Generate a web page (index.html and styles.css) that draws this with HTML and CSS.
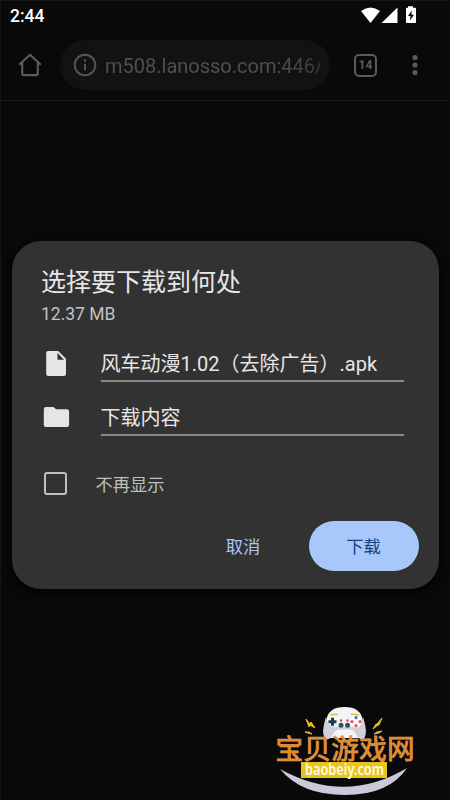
FILE: index.html
```html
<!DOCTYPE html>
<html lang="zh-CN">
<head>
<meta charset="utf-8">
<title>下载</title>
<link rel="stylesheet" href="styles.css">
</head>
<body>
<div class="screen">
  <header class="status">
    <span class="clock">2:44</span>
    <svg class="status-icons" width="58" height="20" viewBox="0 0 58 20" fill="#fff">
      <path d="M0 5Q9.500-2.200 19 5L9.500 17Z"/>
      <path d="M36.500 1.500V17H20.500Z"/>
      <path d="M47 .3h5v1.500h2.200q.8 0 .8.800v13.600q0 .8-.8.800h-8.400q-.8 0-.8-.8V2.600q0-.8.800-.8H47Z"/>
      <path d="M50.800 4.500L47 10h2.500l-.6 4.500L53 8.800h-2.600Z" fill="#080808"/>
    </svg>
  </header>
  <nav class="toolbar">
    <svg class="home" width="24" height="24" viewBox="0 0 24 24" fill="none" stroke="#5b5b5b" stroke-width="2.100">
      <path d="M1.200 11.800L12 1.800l10.800 10M4.200 9.500v11.600q0 1 1 1h13.600q1 0 1-1V9.500" stroke-linejoin="round"/>
    </svg>
    <div class="address">
      <svg width="24" height="24" viewBox="0 0 24 24" fill="none" stroke="#555" stroke-width="2">
        <circle cx="12" cy="12" r="10.300"/><path d="M12 10.800v6.400M12 6.600v2.200"/>
      </svg>
      <span class="url">m508.lanosso.com:446/</span>
    </div>
    <div class="tabs">14</div>
    <svg class="more" width="6" height="22" viewBox="0 0 6 22" fill="#5b5b5b">
      <circle cx="3" cy="3.500" r="2.600"/><circle cx="3" cy="11" r="2.600"/><circle cx="3" cy="18.500" r="2.600"/>
    </svg>
  </nav>
  <main class="page">
    <section class="dialog">
      <h1>选择要下载到何处</h1>
      <p class="size">12.37 MB</p>
      <div class="row">
        <svg width="30" height="28" viewBox="0 0 30 28" fill="#e5e5e5">
          <path fill-rule="evenodd" d="M7.200 2h10L25 9.800V25q0 2-2 2H7.200q-2 0-2-2V4q0-2 2-2ZM16.500 4v6.800h6.500Z"/>
        </svg>
        <div class="field">风车动漫1.02（去除广告）.apk</div>
      </div>
      <div class="row">
        <svg width="30" height="28" viewBox="0 0 30 28" fill="#e5e5e5">
          <path d="M5 4h7.500l2.600 2.300h10.800q2.200 0 2.200 2.200v13.300q0 2.200-2.200 2.200H5q-2.200 0-2.200-2.200V6.200Q2.800 4 5 4Z"/>
        </svg>
        <div class="field">下载内容</div>
      </div>
      <label class="check"><span class="box"></span><span>不再显示</span></label>
      <div class="actions">
        <button class="cancel">取消</button>
        <button class="download">下载</button>
      </div>
    </section>
  </main>
  <svg class="watermark" width="160" height="100" viewBox="0 0 160 100">
    <path d="M15 69Q80 105 142 68Q124 95 80 95Q36 95 15 69Z" fill="#c9cad9"/>
    <path d="M61 22C62 11 69 7 79.500 7S97 11 98 22L97 38H62Z" fill="#f4f4f5"/>
    <path d="M61 17Q56 32 59.500 38Q64 42 68 34Q70 29.500 75 29.500H84Q89 29.500 91 34Q95 42 99.500 38Q103 32 98 17Q97 27 88 27H71Q62 27 61 17Z" fill="#cfd0dc"/>
    <path d="M65 15.500q3-2 8-1M86 14.500q5-1 8 1" stroke="#e4b84c" stroke-width="1.500" fill="none"/>
    <path d="M63.500 21.700h8M67.500 17.700v8" stroke="#173d52" stroke-width="3"/>
    <circle cx="91" cy="21.700" r="5.800" fill="#fff"/>
    <circle cx="87" cy="21.700" r="1.600" fill="#e3505f"/><circle cx="95" cy="21.700" r="1.600" fill="#e3505f"/>
    <circle cx="91" cy="17.700" r="1.600" fill="#347ca6"/><circle cx="91" cy="25.700" r="1.600" fill="#e3505f"/>
    <circle cx="76" cy="20.500" r="1.200" fill="#d94352"/><circle cx="82.500" cy="20.500" r="1.200" fill="#d94352"/>
    <circle cx="76" cy="25.300" r="2.500" fill="#25566c"/><circle cx="82.500" cy="25.300" r="2.500" fill="#25566c"/>
    <path d="M41 19l4 5 1-2 4 6-5-3-1 2ZM40 32l4 0 3 2-4-1ZM117 18l-5 6h-1l-3 5 5-4h1ZM117 31l-5 1-3 2 5-1Z" fill="#efba25" stroke="#efba25"/>
    <text x="10.500" y="58.500" class="brand" textLength="139">宝贝游戏网</text>
    <rect x="36" y="62" width="86" height="16" fill="#e8c51d"/>
    <text x="40" y="74.500" class="domain" textLength="79" lengthAdjust="spacingAndGlyphs">baobeiy.com</text>
  </svg>
</div>
</body>
</html>
```

FILE: styles.css
```css
* { box-sizing: border-box; }
body { margin: 0; background: #090909; }
.screen {
  position: relative;
  width: 450px;
  height: 800px;
  overflow: hidden;
  display: flex;
  flex-direction: column;
  background: #090909;
  border-top: 1px solid #171717;
  border-left: 1px solid #151515;
  font-family: Roboto, "Noto Sans CJK SC", sans-serif;
}
.status {
  height: 34px;
  display: flex;
  justify-content: space-between;
  padding: 5px 32px 0 9px;
}
.clock { color: #fff; font-size: 17.500px; line-height: 21px; font-weight: 500; }
.toolbar {
  height: 66px;
  display: flex;
  align-items: center;
  padding: 0 32px 6px 17px;
  border-bottom: 1px solid #191919;
}
.address {
  width: 270px;
  height: 50px;
  margin-left: 18px;
  padding: 0 10px 0 13px;
  display: flex;
  align-items: center;
  gap: 8px;
  border-radius: 25px;
  background: #121212;
}
.address svg { flex: none; }
.url {
  overflow: hidden;
  white-space: nowrap;
  font-size: 20px;
  line-height: 28px;
  padding-top: 2px;
  color: #4d4d4d;
  background: linear-gradient(90deg, #505050 80%, #383838);
  -webkit-background-clip: text;
  background-clip: text;
  -webkit-text-fill-color: transparent;
}
.tabs {
  width: 23px;
  height: 23px;
  margin: 1px 0 0 24px;
  border: 2px solid #5b5b5b;
  border-radius: 5px;
  color: #5b5b5b;
  font-size: 12px;
  font-weight: 700;
  line-height: 19px;
  text-align: center;
}
.more { margin-left: auto; }
.status-icons { margin-right: -.5px; }
.page { padding: 140px 11.500px 0 10.500px; }
.dialog {
  height: 348px;
  padding: 26px 20px 0 29.500px;
  border-radius: 29px;
  background: #323232;
  box-shadow: 0 3px 10px #000;
}
h1 {
  margin: 0;
  color: #e6e6e6;
  font-size: 25px;
  font-weight: 400;
  line-height: 31px;
}
.size { margin: 6px 0 20px; color: #c2c2c2; font-size: 17.500px; line-height: 21px; }
.row {
  display: flex;
  align-items: flex-start;
  height: 53.500px;
  padding-right: 15px;
}
.row svg { flex: none; margin: 4px 0 0 -.5px; }
.field {
  flex: 1;
  height: 37px;
  margin-left: 30px;
  border-bottom: 2px solid #898989;
  color: #e6e6e6;
  font-size: 20px;
  line-height: 39px;
  white-space: nowrap;
}
.check {
  display: flex;
  align-items: center;
  gap: 29px;
  height: 24px;
  margin: 19px 0 0 2.500px;
  color: #bdc0be;
  font-size: 17.300px;
}
.box { width: 23px; height: 23px; border: 2px solid #bec1bf; border-radius: 3px; }
.actions {
  display: flex;
  justify-content: flex-end;
  margin-top: 26px;
}
button {
  height: 50px;
  border: 0;
  padding: 1px 0 0;
  font: 400 17.300px/50px Roboto, "Noto Sans CJK SC", sans-serif;
}
.cancel { width: 131px; background: none; color: #a8c7fa; }
.download { width: 110px; border-radius: 25px; background: #a8c7fa; color: #15407e; }
.watermark { position: absolute; left: 264px; top: 699px; }
.brand {
  font: 400 27.500px "Noto Sans CJK SC", sans-serif;
  fill: #e78b2a;
  stroke: #d9a468;
  stroke-width: .8px;
  paint-order: stroke;
}
.domain { font: 600 15.500px "Noto Sans", sans-serif; fill: #fffbe5; }
```
